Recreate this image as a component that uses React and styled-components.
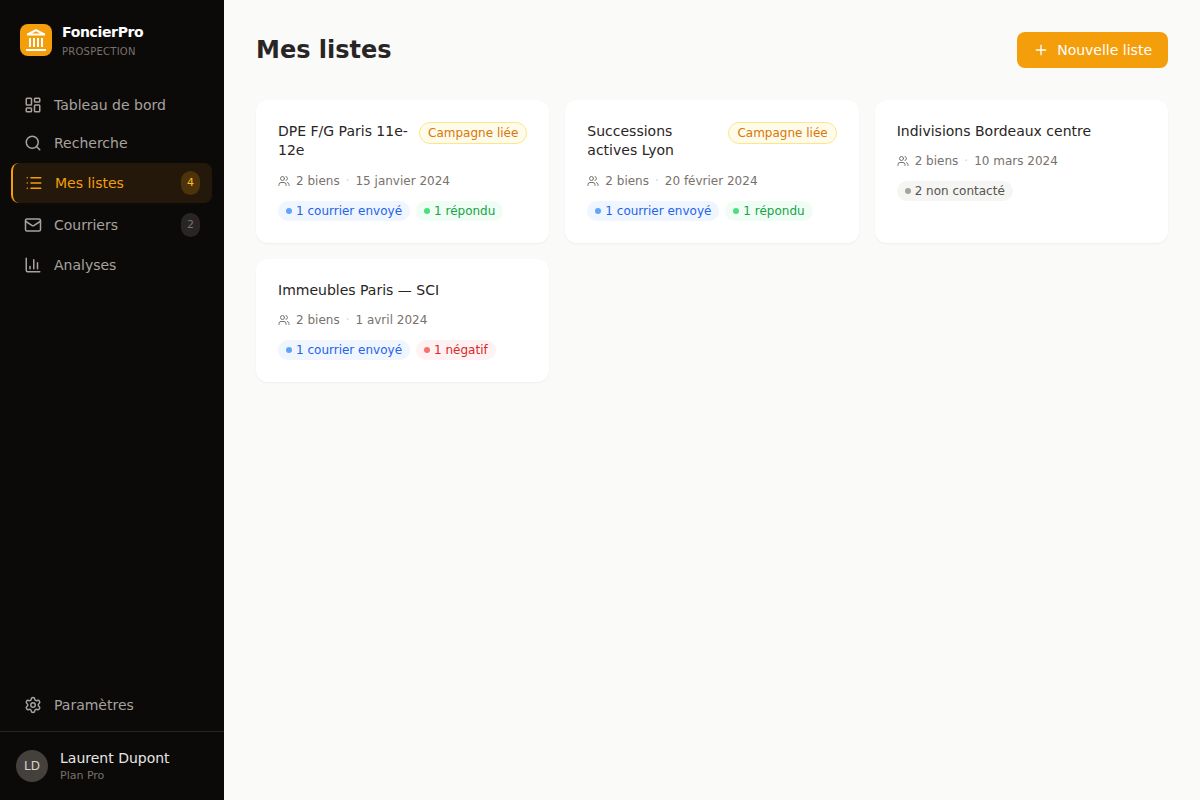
import styled, { createGlobalStyle, css } from "styled-components";
import {
  ChartColumn,
  LayoutDashboard,
  List,
  Mail,
  Plus,
  Search,
  Settings,
  Users,
} from "lucide-react";

const navItems = [
  { label: "Tableau de bord", icon: LayoutDashboard },
  { label: "Recherche", icon: Search },
  { label: "Mes listes", icon: List, count: 4, active: true },
  { label: "Courriers", icon: Mail, count: 2 },
  { label: "Analyses", icon: ChartColumn },
];

const lists = [
  {
    name: "DPE F/G Paris 11e-12e",
    date: "15 janvier 2024",
    linked: true,
    statuses: [
      { tone: "blue", text: "1 courrier envoyé" },
      { tone: "green", text: "1 répondu" },
    ],
  },
  {
    name: "Successions actives Lyon",
    date: "20 février 2024",
    linked: true,
    statuses: [
      { tone: "blue", text: "1 courrier envoyé" },
      { tone: "green", text: "1 répondu" },
    ],
  },
  {
    name: "Indivisions Bordeaux centre",
    date: "10 mars 2024",
    statuses: [{ tone: "grey", text: "2 non contacté" }],
  },
  {
    name: "Immeubles Paris — SCI",
    date: "1 avril 2024",
    statuses: [
      { tone: "blue", text: "1 courrier envoyé" },
      { tone: "red", text: "1 négatif" },
    ],
  },
];

const tones = {
  blue: { bg: "#eff6ff", dot: "#60a5fa", text: "#2563eb" },
  green: { bg: "#f0fdf4", dot: "#4ade80", text: "#16a34a" },
  grey: { bg: "#f5f5f4", dot: "#a8a29e", text: "#57534e" },
  red: { bg: "#fef2f2", dot: "#f87171", text: "#dc2626" },
};

const LogoIcon = () => (
  <svg width="20" height="24" viewBox="0 0 20 24" fill="#fff">
    <path
      fillRule="evenodd"
      d="M10 1 19 5.6v1.9H1V5.6Zm0 2.2L6 5.5h8Z"
    />
    <path d="M3 10h2v9H3zM7 10h2v9H7zM11 10h2v9h-2zM15 10h2v9h-2zM0 21h20v2H0z" />
  </svg>
);

const Sidebar = () => {
  return (
    <SidebarContainer>
      <Brand>
        <LogoBox>
          <LogoIcon />
        </LogoBox>
        <div>
          <BrandName>FoncierPro</BrandName>
          <BrandTag>PROSPECTION</BrandTag>
        </div>
      </Brand>

      <Nav>
        {navItems.map(({ label, icon: Icon, count, active }) => (
          <NavItem key={label} $active={active}>
            <Icon size={18} strokeWidth={2} />
            <span className="label">{label}</span>
            {count && <Count $active={active}>{count}</Count>}
          </NavItem>
        ))}
      </Nav>

      <SettingsNav>
        <NavItem>
          <Settings size={18} strokeWidth={2} />
          <span className="label">Paramètres</span>
        </NavItem>
      </SettingsNav>

      <User>
        <Avatar>LD</Avatar>
        <div>
          <UserName>Laurent Dupont</UserName>
          <UserPlan>Plan Pro</UserPlan>
        </div>
      </User>
    </SidebarContainer>
  );
};

const ListCard = ({ list }) => {
  return (
    <Card>
      <CardTop>
        <CardTitle>{list.name}</CardTitle>
        {list.linked && <Linked>Campagne liée</Linked>}
      </CardTop>
      <Meta>
        <Users size={12} strokeWidth={2} />
        <span>2 biens</span>
        <span className="separator">·</span>
        <span>{list.date}</span>
      </Meta>
      <Statuses>
        {list.statuses.map((status) => (
          <Status key={status.text} $tone={tones[status.tone]}>
            {status.text}
          </Status>
        ))}
      </Statuses>
    </Card>
  );
};

const App = () => {
  return (
    <Layout>
      <GlobalStyle />
      <Sidebar />
      <Main>
        <Header>
          <Title>Mes listes</Title>
          <NewButton>
            <Plus size={16} strokeWidth={2} />
            Nouvelle liste
          </NewButton>
        </Header>
        <Grid>
          {lists.map((list) => (
            <ListCard key={list.name} list={list} />
          ))}
        </Grid>
      </Main>
    </Layout>
  );
};

const GlobalStyle = createGlobalStyle`
  * {
    box-sizing: border-box;
    margin: 0;
  }

  body {
    font-family: "DejaVu Sans", sans-serif;
    font-size: 14px;
    line-height: 20px;
    color: #292524;
    background: #fafaf9;
  }

  svg {
    display: block;
    flex-shrink: 0;
  }
`;

const Layout = styled.div`
  display: flex;
  height: 100vh;
`;

const SidebarContainer = styled.aside`
  display: flex;
  flex-direction: column;
  width: 224px;
  flex-shrink: 0;
  background: #0c0a09;
`;

const Brand = styled.div`
  display: flex;
  align-items: flex-start;
  gap: 10px;
  height: 79px;
  padding: 22px 20px 0;
`;

const LogoBox = styled.div`
  display: flex;
  align-items: center;
  justify-content: center;
  width: 32px;
  height: 32px;
  margin-top: 2px;
  border-radius: 8px;
  background: #f59e0b;
`;

const BrandName = styled.div`
  font-weight: 700;
  letter-spacing: -0.35px;
  color: #fff;
`;

const BrandTag = styled.div`
  margin-top: 2px;
  font-size: 10px;
  line-height: 15px;
  letter-spacing: 0.25px;
  color: #78716c;
`;

const Nav = styled.nav`
  display: flex;
  flex-direction: column;
  gap: 2px;
  flex: 1;
  padding: 8px 12px;
`;

const NavItem = styled.a`
  display: flex;
  align-items: center;
  gap: 12px;
  padding: 8px 12px;
  border-radius: 8px;
  font-weight: 500;
  color: #a8a29e;
  cursor: pointer;

  .label {
    flex: 1;
  }

  ${({ $active }) =>
    $active &&
    css`
      margin-left: -1px;
      border-left: 2px solid #f59e0b;
      color: #f59e0b;
      background: rgba(245, 158, 11, 0.1);
    `}
`;

const Count = styled.span`
  padding: 2px 6px;
  border-radius: 999px;
  font-size: 11px;
  color: ${({ $active }) => ($active ? "#fbbf24" : "#78716c")};
  background: ${({ $active }) =>
    $active ? "rgba(245, 158, 11, 0.2)" : "#292524"};
`;

const SettingsNav = styled.div`
  padding: 0 12px 8px;
`;

const User = styled.div`
  display: flex;
  align-items: center;
  gap: 12px;
  padding: 16px;
  border-top: 1px solid #292524;
`;

const Avatar = styled.div`
  display: flex;
  align-items: center;
  justify-content: center;
  width: 32px;
  height: 32px;
  border-radius: 50%;
  font-size: 12px;
  color: #d6d3d1;
  background: #44403c;
`;

const UserName = styled.div`
  font-weight: 500;
  color: #e7e5e4;
`;

const UserPlan = styled.div`
  font-size: 11px;
  line-height: 16.5px;
  color: #78716c;
`;

const Main = styled.main`
  flex: 1;
  padding: 32px;
`;

const Header = styled.header`
  display: flex;
  align-items: center;
  justify-content: space-between;
  margin-bottom: 32px;
`;

const Title = styled.h1`
  font-size: 24px;
  line-height: 32px;
  font-weight: 700;
`;

const NewButton = styled.button`
  display: flex;
  align-items: center;
  gap: 8px;
  padding: 8px 16px;
  border: none;
  border-radius: 8px;
  font: inherit;
  font-weight: 500;
  color: #fff;
  background: #f59e0b;
  cursor: pointer;
`;

const Grid = styled.div`
  display: grid;
  grid-template-columns: repeat(3, minmax(0, 1fr));
  gap: 16px;
`;

const Card = styled.div`
  padding: 22px;
  border-radius: 12px;
  background: #fff;
  box-shadow: 0 1px 2px rgba(0, 0, 0, 0.05);
`;

const CardTop = styled.div`
  display: flex;
  align-items: flex-start;
  justify-content: space-between;
  gap: 8px;
  margin-bottom: 12px;
`;

const CardTitle = styled.h3`
  font-size: 14px;
  line-height: 19.25px;
  font-weight: 500;
`;

const Linked = styled.span`
  flex-shrink: 0;
  padding: 2px 8px;
  border: 1px solid #fde68a;
  border-radius: 999px;
  font-size: 12px;
  line-height: 16px;
  color: #d97706;
  background: #fffbeb;
`;

const Meta = styled.div`
  display: flex;
  align-items: center;
  gap: 6px;
  margin-bottom: 12px;
  font-size: 12px;
  line-height: 16px;
  color: #78716c;

  .separator {
    color: #d6d3d1;
  }
`;

const Statuses = styled.div`
  display: flex;
  flex-wrap: wrap;
  gap: 6px;
`;

const Status = styled.span`
  display: inline-flex;
  align-items: center;
  gap: 4px;
  padding: 2px 8px;
  border-radius: 999px;
  font-size: 12px;
  line-height: 16px;
  color: ${({ $tone }) => $tone.text};
  background: ${({ $tone }) => $tone.bg};

  &::before {
    content: "";
    width: 6px;
    height: 6px;
    border-radius: 50%;
    background: ${({ $tone }) => $tone.dot};
  }
`;

export default App;
